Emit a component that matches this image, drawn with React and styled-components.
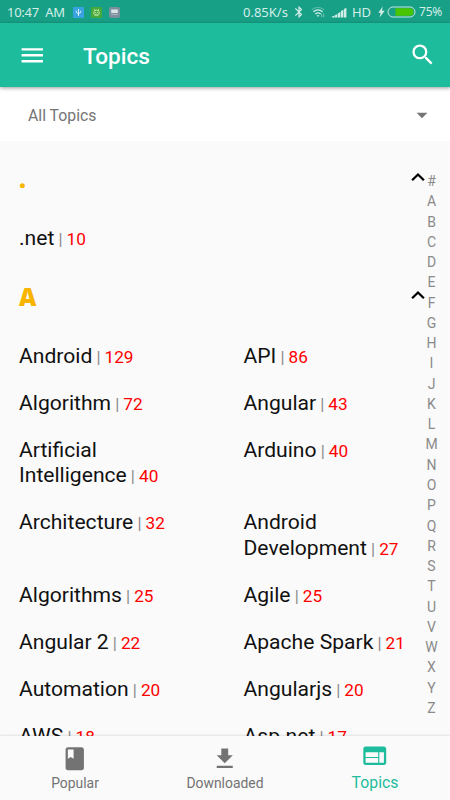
import React from 'react'
import styled, { createGlobalStyle } from 'styled-components'
import {
  MdArrowDropDown,
  MdBluetooth,
  MdBook,
  MdFileDownload,
  MdMenu,
  MdSearch,
  MdWeb,
} from 'react-icons/md'

const GlobalStyle = createGlobalStyle`
  * {
    box-sizing: border-box;
  }

  body {
    margin: 0;
    font-family: Roboto, sans-serif;
  }
`

const Screen = styled.div`
  position: relative;
  display: flex;
  flex-direction: column;
  width: 450px;
  height: 800px;
  overflow: hidden;
  background: #fafafa;
`

const StatusBar = styled.div`
  display: flex;
  flex: none;
  justify-content: space-between;
  height: 23px;
  padding: 1px 8px 0 7px;
  background: #18a086;
  color: #d3eee8;
`

const StatusGroup = styled.div`
  display: flex;
  align-items: center;
`

const StatusText = styled.span`
  margin-left: ${({ $left }) => $left || 0}px;
  font-family: 'Noto Sans', sans-serif;
  font-size: ${({ $size }) => $size || 13}px;
  letter-spacing: ${({ $spacing }) => $spacing || 0}px;
  line-height: 22px;
  white-space: pre;
`

const StatusIcon = styled.svg`
  flex: none;
  margin-left: ${({ $left }) => $left || 0}px;
`

const Toolbar = styled.header`
  z-index: 1;
  display: flex;
  flex: none;
  align-items: center;
  height: 64px;
  padding: 0 14px 0 18px;
  background: #1dbc9c;
  box-shadow: 0 1px 4px rgba(0, 0, 0, 0.4);
  color: white;
`

const Title = styled.h1`
  flex: 1;
  margin: 4px 0 0 36.5px;
  font-size: 22.6px;
  font-weight: 500;
  line-height: 28px;
`

const Filter = styled.div`
  display: flex;
  flex: none;
  align-items: center;
  justify-content: space-between;
  height: 54px;
  padding: 2px 15px 0 28px;
  background: white;
  color: #757575;
  font-size: 15.8px;
`

const Content = styled.main`
  flex: 1;
  min-height: 0;
  padding-top: 2px;
  overflow: hidden;
`

const SectionHeader = styled.div`
  display: flex;
  justify-content: space-between;
  height: 71px;
  padding: 28px 25px 0 19px;
`

const Letter = styled.h2`
  margin: -7px 0 0;
  color: #f7b500;
  font-family: 'Open Sans', sans-serif;
  font-size: 24px;
  font-weight: 800;
  line-height: 30px;
`

const TopicGrid = styled.div`
  display: grid;
  grid-template-columns: 224.5px 225px;
`

const Topic = styled.div`
  padding: 10.75px 18px 10.75px 19px;
  color: #111;
  font-size: 21.1px;
  line-height: 25.5px;
`

const Divider = styled.span`
  color: #888;
  font-size: 16.5px;
  line-height: 1;
`

const Count = styled.span`
  color: #ff0000;
  font-size: 17.2px;
  line-height: 1;
`

// floats over the list, same as the native fast scroller
const AlphabetIndex = styled.nav`
  position: absolute;
  top: 171px;
  right: 8px;
  display: flex;
  flex-direction: column;
  width: 21px;
  color: #8a8a8a;
  font-size: 14px;
  text-align: center;
`

const IndexLetter = styled.span`
  height: 20.28px;
  line-height: 20.28px;
`

const BottomNav = styled.footer`
  z-index: 1;
  display: grid;
  flex: none;
  grid-template-columns: repeat(3, 1fr);
  height: 64px;
  background: #fafafa;
  box-shadow: 0 -1px 2px rgba(0, 0, 0, 0.1);
`

const NavItem = styled.div`
  display: flex;
  flex-direction: column;
  align-items: center;
  padding-top: ${({ $active }) => ($active ? 6 : 8.5)}px;
  color: ${({ $active }) => ($active ? '#1dbc9c' : '#737373')};
  font-size: ${({ $active }) => ($active ? 15.8 : 13.9)}px;
  line-height: 20px;
`

const NavLabel = styled.span`
  margin-top: ${({ $active }) => ($active ? 3 : 1)}px;
`

const sections = [
  { letter: '.', topics: [['.net', 10]] },
  {
    letter: 'A',
    topics: [
      ['Android', 129],
      ['API', 86],
      ['Algorithm', 72],
      ['Angular', 43],
      ['Artificial Intelligence', 40],
      ['Arduino', 40],
      ['Architecture', 32],
      ['Android Development', 27],
      ['Algorithms', 25],
      ['Agile', 25],
      ['Angular 2', 22],
      ['Apache Spark', 21],
      ['Automation', 20],
      ['Angularjs', 20],
      ['AWS', 18],
      ['Asp.net', 17],
    ],
  },
]

const navItems = [
  { label: 'Popular', Icon: MdBook },
  { label: 'Downloaded', Icon: MdFileDownload },
  { label: 'Topics', Icon: MdWeb, active: true },
]

const UsbIcon = () => (
  <StatusIcon $left={8} width="11" height="11" viewBox="0 0 11 11">
    <rect width="11" height="11" rx="1" fill="#38a3e0" />
    <path
      d="M5.5 2v7M3.3 3.8v1.7l2.2 1.3 2.2-1.3V3.8"
      fill="none"
      stroke="#e8f6ff"
      strokeWidth="0.9"
    />
  </StatusIcon>
)

const DebugIcon = () => (
  <StatusIcon $left={7} width="11" height="11" viewBox="0 0 11 11">
    <rect width="11" height="11" rx="1" fill="#43a93b" />
    <circle cx="5.5" cy="5.8" r="2.8" fill="none" stroke="#c5e5a8" />
    <path d="M3 2l1 1.6M8 2L7 3.6M4 5.4h1M6 5.4h1M4.3 7.2h2.4" stroke="#d5edb8" strokeWidth="0.8" />
  </StatusIcon>
)

const NoticeIcon = () => (
  <StatusIcon $left={7} width="11" height="11" viewBox="0 0 11 11">
    <rect width="11" height="11" rx="2" fill="#7b8f9f" />
    <rect x="2.2" y="2.5" width="6.6" height="3.5" fill="#dce3e7" />
    <path d="M2.2 7.5h6.6" stroke="#a8b6bf" />
  </StatusIcon>
)

const WifiIcon = () => (
  <StatusIcon $left={5} width="14" height="12" viewBox="0 0 14 12" fill="none" stroke="currentColor">
    <path d="M0.8 3.8q6.2-5 12.4 0" strokeWidth="1.2" opacity="0.35" />
    <path d="M2.4 5.7q4.6-3.7 9.2 0" strokeWidth="1.3" />
    <path d="M4.3 7.9q2.7-2.2 5.4 0" strokeWidth="1.3" />
    <path d="M5.5 9.2h3L7 11z" fill="currentColor" stroke="none" />
    <path d="M10.7 7.5v3.7M12.7 7.5v3.7" strokeWidth="0.8" opacity="0.6" />
  </StatusIcon>
)

const SignalIcon = () => (
  <StatusIcon $left={7} width="15" height="11" viewBox="0 0 15 11" fill="currentColor">
    <path d="M0 10.5V9.5l2.6-1v2zM3 10.5V8.2l2.4-1.2v3.5zM6 10.5V6.3l2.4-1.3v5.5zM9 10.5V4l2.4-1.3v7.8zM12 10.5V2l2.4-1.3v9.8z" />
  </StatusIcon>
)

const BoltIcon = () => (
  <StatusIcon $left={7} width="7" height="12" viewBox="0 0 7 12" fill="currentColor">
    <path d="M4.7 0.5L.3 6.8h2.4L1.6 11.5 6.7 4.8H4z" />
  </StatusIcon>
)

const BatteryIcon = () => (
  <StatusIcon $left={2} width="29" height="12" viewBox="0 0 29 12">
    <rect x="1" y="1" width="27" height="10" rx="5" fill="none" stroke="#c3e6df" />
    <path d="M8.5 2.3h14.3a3.7 3.7 0 0 1 0 7.4H8.5z" fill="#48c500" />
  </StatusIcon>
)

const CollapseIcon = () => (
  <svg width="14" height="12" viewBox="0 0 14 12" fill="none" stroke="#000" strokeWidth="2.3">
    <path d="M1.1 9.3L7 3.5 12.9 9.3" />
  </svg>
)

export default function App() {
  return (
    <Screen>
      <GlobalStyle />
      <StatusBar>
        <StatusGroup>
          <StatusText $spacing={-0.25}>{`10:47  AM`}</StatusText>
          <UsbIcon />
          <DebugIcon />
          <NoticeIcon />
        </StatusGroup>
        <StatusGroup>
          <StatusText>{`0.85K/s`}</StatusText>
          <StatusIcon as={MdBluetooth} $left={4} size={14} />
          <WifiIcon />
          <SignalIcon />
          <StatusText $left={5}>{`HD`}</StatusText>
          <BoltIcon />
          <BatteryIcon />
          <StatusText $left={3} $size={12} $spacing={-0.25}>{`75%`}</StatusText>
        </StatusGroup>
      </StatusBar>
      <Toolbar>
        <MdMenu size={28.5} />
        <Title>{`Topics`}</Title>
        <MdSearch size={27.5} />
      </Toolbar>
      <Filter>
        {`All Topics`}
        <MdArrowDropDown size={26} />
      </Filter>
      <Content>
        {sections.map(({ letter, topics }) => (
          <section key={letter}>
            <SectionHeader>
              <Letter>{letter}</Letter>
              <CollapseIcon />
            </SectionHeader>
            <TopicGrid>
              {topics.map(([name, count]) => (
                <Topic key={name}>
                  {name}
                  <Divider>{` | `}</Divider>
                  <Count>{count}</Count>
                </Topic>
              ))}
            </TopicGrid>
          </section>
        ))}
      </Content>
      <AlphabetIndex>
        {'#ABCDEFGHIJKLMNOPQRSTUVWXYZ'.split('').map((char) => (
          <IndexLetter key={char}>{char}</IndexLetter>
        ))}
      </AlphabetIndex>
      <BottomNav>
        {navItems.map(({ label, Icon, active }) => (
          <NavItem key={label} $active={active}>
            <Icon size={27.5} />
            <NavLabel $active={active}>{label}</NavLabel>
          </NavItem>
        ))}
      </BottomNav>
    </Screen>
  )
}
